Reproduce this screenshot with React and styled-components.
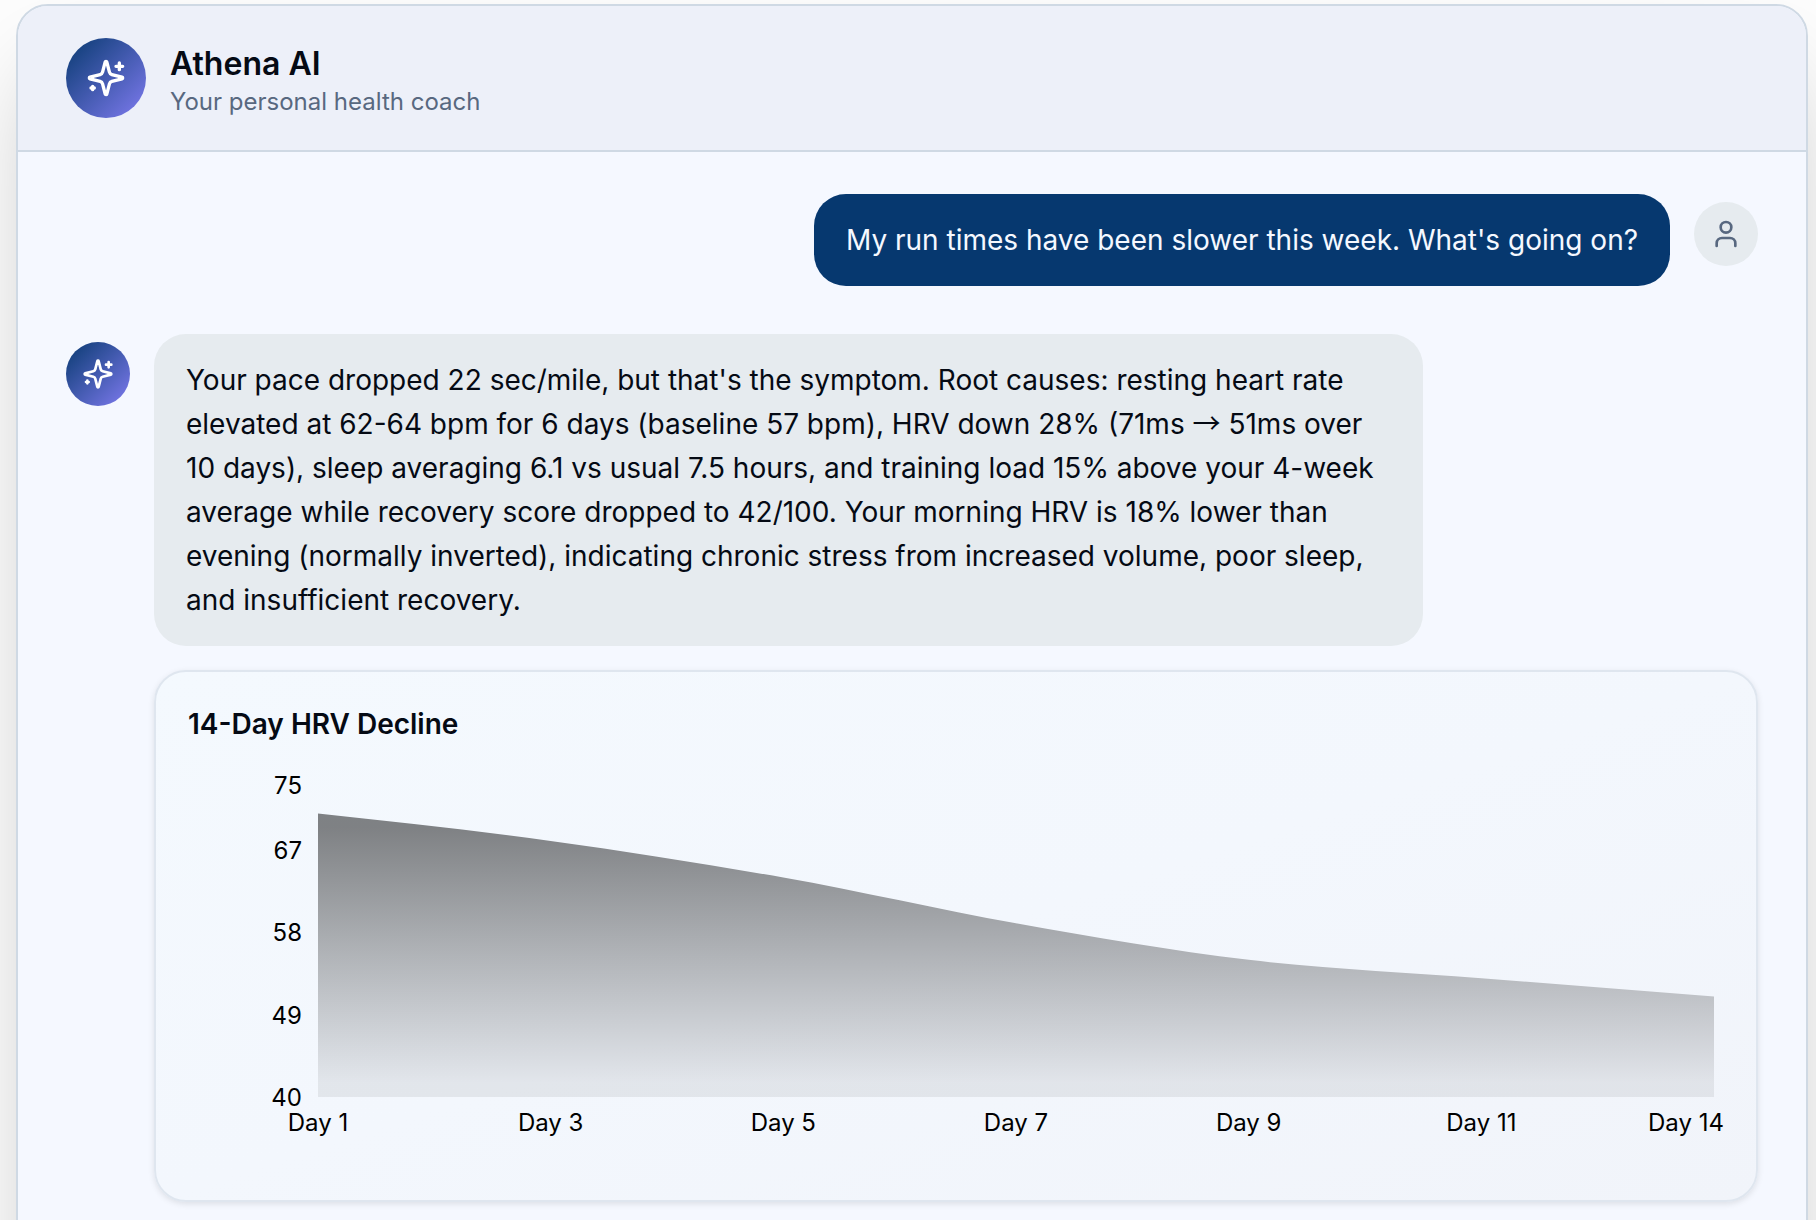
import React, { useEffect, useId, useRef, useState } from "react";
import styled, { createGlobalStyle } from "styled-components";

const GlobalStyle = createGlobalStyle`
  *, *::before, *::after { box-sizing: border-box; }
  body {
    margin: 0;
    background: #fdfdfd;
    color: #050a14;
    font-family: Inter, "Liberation Sans", sans-serif;
    -webkit-font-smoothing: antialiased;
  }
  h1, h2, p, figure { margin: 0; }
`;

const Page = styled.main`
  display: flex;
  height: 100vh;
  padding: 4px 8px 0 16px;
  overflow: hidden;
`;

const ChatCard = styled.section`
  flex: 1;
  min-width: 0;
  min-height: 1400px;
  border: 2px solid #cfd9e4;
  border-radius: 32px;
  background: #f5f8ff;
  box-shadow: 0 50px 100px -24px rgba(0, 0, 0, 0.25);
  overflow: hidden;
`;

const Header = styled.header`
  display: flex;
  align-items: flex-start;
  gap: 24px;
  padding: 32px 48px 30px;
  border-bottom: 2px solid #cfd9e4;
  background: #edf0f9;
`;

const Heading = styled.div`
  padding-top: 6px;
`;

const Avatar = styled.div`
  flex: none;
  display: flex;
  align-items: center;
  justify-content: center;
  width: ${(p) => (p.$large ? 80 : 64)}px;
  height: ${(p) => (p.$large ? 80 : 64)}px;
  margin-top: ${(p) => (p.$large ? 0 : 8)}px;
  border-radius: 50%;
  color: ${(p) => (p.$user ? "#586880" : "#ffffff")};
  background: ${(p) =>
    p.$user ? "#e6ebef" : "linear-gradient(135deg, #083a70, #7f7bf0)"};
`;

const Title = styled.h1`
  font-size: 32px;
  line-height: 40px;
  font-weight: 600;
`;

const Subtitle = styled.p`
  font-size: 24px;
  line-height: 36px;
  color: #586880;
`;

const Messages = styled.div`
  display: flex;
  flex-direction: column;
  gap: 48px;
  padding: 42px 48px;
`;

const Message = styled.article`
  display: flex;
  align-items: flex-start;
  justify-content: ${(p) => (p.$user ? "flex-end" : "flex-start")};
  gap: 24px;
`;

const Answer = styled.div`
  flex: 1;
  min-width: 0;
  display: flex;
  flex-direction: column;
  gap: 24px;
  container-type: inline-size;
`;

const Bubble = styled.p`
  padding: 24px 32px;
  border-radius: 32px;
  font-size: 28px;
  line-height: 44px;
  color: ${(p) => (p.$user ? "#f5f8ff" : "#050a14")};
  background: ${(p) => (p.$user ? "#06386f" : "#e6ebef")};
  max-width: ${(p) => (p.$user ? "75%" : "calc((100cqw + 88px) * 0.75)")};
`;

const Arrow = styled.span`
  font-family: "Noto Sans CJK SC", sans-serif;
  line-height: 1;
`;

const ChartCard = styled.figure`
  display: flex;
  flex-direction: column;
  gap: 24px;
  padding: 32px;
  border: 2px solid #dfe6ef;
  border-radius: 32px;
  background: linear-gradient(to bottom right, #f4f9fe, #f3f7fd 50%, #f1f4fa);
  box-shadow: 0 2px 6px rgba(0, 0, 0, 0.1);
`;

const ChartTitle = styled.h2`
  font-size: 28px;
  line-height: 40px;
  font-weight: 600;
`;

const ChartFrame = styled.div`
  height: 400px;
  min-width: 0;

  svg { display: block; }
  text {
    font-size: 24px;
    fill: #000000;
  }
`;

function SparklesIcon({ size }) {
  return (
    <svg width={size} height={size} viewBox="0 0 24 24" fill="none" stroke="currentColor" strokeWidth="2" strokeLinecap="round" strokeLinejoin="round" aria-hidden="true">
      <path d="M9.937 15.5A2 2 0 0 0 8.5 14.063l-6.135-1.582a.5.5 0 0 1 0-.962L8.5 9.936A2 2 0 0 0 9.937 8.5l1.582-6.135a.5.5 0 0 1 .963 0L14.063 8.5A2 2 0 0 0 15.5 9.937l6.135 1.581a.5.5 0 0 1 0 .964L15.5 14.063a2 2 0 0 0-1.437 1.437l-1.582 6.135a.5.5 0 0 1-.963 0z" />
      <path d="M20 3v4M22 5h-4M4 17v2M5 18H3" />
    </svg>
  );
}

function UserIcon({ size }) {
  return (
    <svg width={size} height={size} viewBox="0 0 24 24" fill="none" stroke="currentColor" strokeWidth="2" strokeLinecap="round" strokeLinejoin="round" aria-hidden="true">
      <path d="M19 21v-2a4 4 0 0 0-4-4H9a4 4 0 0 0-4 4v2" />
      <circle cx="12" cy="7" r="4" />
    </svg>
  );
}

const HRV = [
  { day: "Day 1", ms: 71 },
  { day: "Day 3", ms: 68 },
  { day: "Day 5", ms: 64 },
  { day: "Day 7", ms: 59 },
  { day: "Day 9", ms: 55 },
  { day: "Day 11", ms: 53 },
  { day: "Day 14", ms: 51 },
];
const TICKS = [75, 67, 58, 49, 40];
const MARGIN = { top: 9, right: 10, bottom: 71, left: 130 };

// Monotone cubic through evenly spaced points
function monotonePath(pts) {
  const step = pts[1][0] - pts[0][0];
  const slopes = pts.slice(1).map((p, i) => (p[1] - pts[i][1]) / step);
  const inner = slopes.slice(1).map((s, i) => {
    const prev = slopes[i];
    if (s * prev <= 0) return 0;
    return Math.sign(s) * 2 * Math.min(Math.abs(s), Math.abs(prev), Math.abs(s + prev) / 4);
  });
  const last = slopes.length - 1;
  const tangents = [
    (3 * slopes[0] - inner[0]) / 2,
    ...inner,
    (3 * slopes[last] - inner[inner.length - 1]) / 2,
  ];
  return pts.slice(1).reduce((d, [x, y], i) => {
    const [x0, y0] = pts[i];
    const third = step / 3;
    return `${d}C${x0 + third},${y0 + third * tangents[i]},${x - third},${y - third * tangents[i + 1]},${x},${y}`;
  }, `M${pts[0][0]},${pts[0][1]}`);
}

function AreaChart({ data, ticks, height = 400 }) {
  const frame = useRef(null);
  const gradientId = useId();
  const [width, setWidth] = useState(0);

  useEffect(() => {
    const measure = () => setWidth(frame.current.clientWidth);
    measure();
    const observer = new ResizeObserver(measure);
    observer.observe(frame.current);
    return () => observer.disconnect();
  }, []);

  const max = ticks[0];
  const min = ticks[ticks.length - 1];
  const bottom = height - MARGIN.bottom;
  const right = width - MARGIN.right;
  const yOf = (v) => bottom - ((v - min) / (max - min)) * (bottom - MARGIN.top);
  const xOf = (i) => MARGIN.left + (i * (right - MARGIN.left)) / (data.length - 1);
  const line = monotonePath(data.map((d, i) => [xOf(i), yOf(d.ms)]));

  return (
    <ChartFrame ref={frame}>
      {width > 0 && (
        <svg width={width} height={height} role="img" aria-label="Heart rate variability over 14 days">
          <defs>
            <linearGradient id={gradientId} x1="0" y1="0" x2="0" y2="1">
              <stop offset="5%" stopColor="#000" stopOpacity="0.48" />
              <stop offset="95%" stopColor="#000" stopOpacity="0.07" />
            </linearGradient>
          </defs>
          <path d={`${line}L${right},${bottom}L${MARGIN.left},${bottom}Z`} fill={`url(#${gradientId})`} />
          {ticks.map((t) => (
            <text key={t} x={MARGIN.left - 16} y={Math.max(yOf(t) + 9, 26)} textAnchor="end">
              {t}
            </text>
          ))}
          {data.map((d, i) => {
            const isLast = i === data.length - 1;
            return (
              <text key={d.day} x={isLast ? width : xOf(i)} y={bottom + 34} textAnchor={isLast ? "end" : "middle"}>
                {d.day}
              </text>
            );
          })}
        </svg>
      )}
    </ChartFrame>
  );
}

export default function App() {
  return (
    <>
      <GlobalStyle />
      <Page>
        <ChatCard>
          <Header>
            <Avatar $large><SparklesIcon size={40} /></Avatar>
            <Heading>
              <Title>Athena AI</Title>
              <Subtitle>Your personal health coach</Subtitle>
            </Heading>
          </Header>
          <Messages>
            <Message $user>
              <Bubble $user>My run times have been slower this week. What's going on?</Bubble>
              <Avatar $user><UserIcon size={32} /></Avatar>
            </Message>
            <Message>
              <Avatar><SparklesIcon size={32} /></Avatar>
              <Answer>
                <Bubble>
                  Your pace dropped 22 sec/mile, but that's the symptom. Root causes: resting heart rate
                  elevated at 62-64 bpm for 6 days (baseline 57 bpm), HRV down 28% (71ms <Arrow>→</Arrow> 51ms over
                  10 days), sleep averaging 6.1 vs usual 7.5 hours, and training load 15% above your 4-week
                  average while recovery score dropped to 42/100. Your morning HRV is 18% lower than
                  evening (normally inverted), indicating chronic stress from increased volume, poor sleep,
                  and insufficient recovery.
                </Bubble>
                <ChartCard>
                  <ChartTitle>14-Day HRV Decline</ChartTitle>
                  <AreaChart data={HRV} ticks={TICKS} />
                </ChartCard>
              </Answer>
            </Message>
          </Messages>
        </ChatCard>
      </Page>
    </>
  );
}
